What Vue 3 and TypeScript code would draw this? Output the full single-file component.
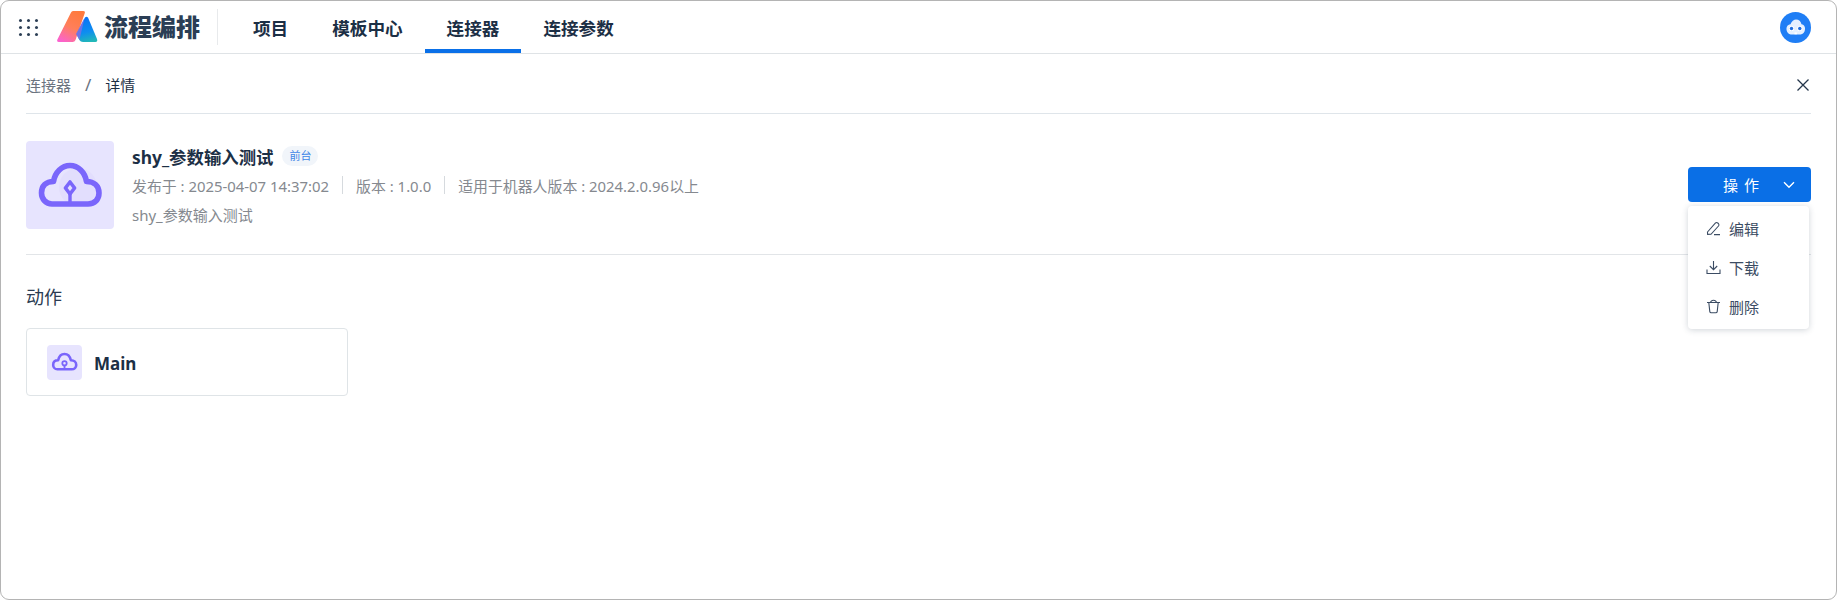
<script setup lang="ts">
const tabs: { label: string; active?: boolean }[] = [
  { label: '项目' },
  { label: '模板中心' },
  { label: '连接器', active: true },
  { label: '连接参数' },
]
const dots: number[] = [0, 1, 2, 3, 4, 5, 6, 7, 8]
</script>

<template>
  <div class="frame">
    <header class="topbar">
      <div class="grid-icon">
        <i v-for="d in dots" :key="d"></i>
      </div>
      <svg class="logo" width="41" height="32" viewBox="0 0 41 32">
        <defs>
          <linearGradient id="lg1" x1="0.7" y1="0" x2="0.2" y2="1">
            <stop offset="0" stop-color="#ff7a3d" />
            <stop offset="0.5" stop-color="#ff7f5a" />
            <stop offset="1" stop-color="#fb62cf" />
          </linearGradient>
          <linearGradient id="lg2" x1="0.4" y1="0" x2="0.6" y2="1">
            <stop offset="0" stop-color="#0a72f5" />
            <stop offset="0.6" stop-color="#0e8df0" />
            <stop offset="1" stop-color="#22b8b8" />
          </linearGradient>
        </defs>
        <path d="M14 1.5 Q14.6 0 16 0 H26 Q28.4 0 27.8 2 L18.5 29 Q17.8 31 15.5 31 H2 Q-0.6 31 0.4 28.6 Z" fill="url(#lg1)" />
        <path d="M28 6.5 Q29.3 4.8 31 6.5 L40 28 Q41 31 38.4 31 H26 Q23.5 31 22.4 29 L19.5 23 Z" fill="url(#lg2)" />
        <path d="M27.6 6.8 L22.4 29 L19 23 Z" fill="#7b70e6" opacity="0.85" />
      </svg>
      <span class="brand">流程编排</span>
      <span class="brand-sep"></span>
      <nav class="tabs">
        <a v-for="t in tabs" :key="t.label" class="tab" :class="{ active: t.active }">{{ t.label }}</a>
      </nav>
      <svg class="avatar" width="31" height="31" viewBox="0 0 31 31">
        <circle cx="15.5" cy="15.5" r="15.5" fill="#1f7ef5" />
        <path d="M7 19.5 C5.5 15.5 7.5 12.5 10.5 12.3 C11.5 9 14 7.5 16 7.5 C19 7.5 20.8 9.5 21.5 12.3 C24.5 12.8 26 15.8 24.5 19.5 C23.5 22 21 22.5 19 22.5 H12.5 C10 22.5 8 22 7 19.5 Z" fill="#e4f0ff" />
        <circle cx="11.5" cy="16.5" r="2.6" fill="#fff" />
        <circle cx="19.8" cy="16.5" r="2.6" fill="#fff" />
        <circle cx="11.5" cy="16.5" r="1.7" fill="#1f6fe0" />
        <circle cx="19.8" cy="16.5" r="1.7" fill="#1f6fe0" />
        <path d="M14.5 20.6 h2.4 v1.6 h-2.4 z" fill="#fff" />
      </svg>
    </header>

    <main class="page">
      <div class="crumbs">
        <span class="crumb">连接器</span>
        <span class="slash">/</span>
        <span class="crumb current">详情</span>
        <svg class="close" width="14" height="14" viewBox="0 0 14 14">
          <path d="M1.5 1.5 L12.5 12.5 M12.5 1.5 L1.5 12.5" stroke="#24364b" stroke-width="1.3" fill="none" />
        </svg>
      </div>

      <section class="detail">
        <div class="big-icon">
          <svg width="88" height="88" viewBox="0 0 88 88">
            <circle cx="52" cy="46" r="19" fill="#dfdafc" opacity="0.6" />
            <path d="M26 63 H62 C69 63 73 58 73 52 C73 45 68 40.5 60.5 40.5 C59 31 52 24.5 44 24.5 C36 24.5 29 31 27.5 40.5 C20 40.5 15.5 45 15.5 52 C15.5 58 20 63 26 63 Z" fill="none" stroke="#7a66fb" stroke-width="5.6" stroke-linejoin="round" />
            <path d="M44 41 L48.6 47 L44 53 L39.4 47 Z" fill="none" stroke="#7a66fb" stroke-width="3.6" stroke-linejoin="round" />
            <path d="M44 53 V63" stroke="#7a66fb" stroke-width="3.4" fill="none" />
          </svg>
        </div>
        <div class="info">
          <div class="title-row">
            <span class="title">shy_参数输入测试</span>
            <span class="tag">前台</span>
          </div>
          <div class="meta">
            <span>发布于 : 2025-04-07 14:37:02</span>
            <span class="vsep"></span>
            <span>版本 : 1.0.0</span>
            <span class="vsep"></span>
            <span>适用于机器人版本 : 2024.2.0.96以上</span>
          </div>
          <div class="desc">shy_参数输入测试</div>
        </div>
        <div class="actions">
          <button class="op-btn" type="button">
            <span class="op-label">操 作</span>
            <svg width="12" height="8" viewBox="0 0 12 8">
              <path d="M1 1.2 L6 6.2 L11 1.2" fill="none" stroke="#fff" stroke-width="1.4" />
            </svg>
          </button>
          <ul class="menu">
            <li>
              <svg width="15" height="15" viewBox="0 0 15 15" fill="none" stroke="#3b4c63" stroke-width="1.1">
                <path d="M1.5 11 L9.5 2 Q10.6 1 11.8 2 L12.6 2.8 Q13.4 3.9 12.5 5 L5 13.3 L1.6 13.4 Z" />
                <path d="M8 13.6 H14" />
              </svg>
              <span>编辑</span>
            </li>
            <li>
              <svg width="15" height="15" viewBox="0 0 15 15" fill="none" stroke="#3b4c63" stroke-width="1.1">
                <path d="M7.5 1 V9.5 M3.8 6 L7.5 9.7 L11.2 6" />
                <path d="M1 9.5 V13.5 H14 V9.5" />
              </svg>
              <span>下载</span>
            </li>
            <li>
              <svg width="15" height="15" viewBox="0 0 15 15" fill="none" stroke="#3b4c63" stroke-width="1.1">
                <path d="M1 3.5 H14 M4.5 3.5 Q5 1.2 7.5 1.2 Q10 1.2 10.5 3.5" />
                <path d="M2.8 3.5 L3.8 12.6 Q4 13.8 5.2 13.8 H9.8 Q11 13.8 11.2 12.6 L12.2 3.5" />
              </svg>
              <span>删除</span>
            </li>
          </ul>
        </div>
      </section>

      <h2 class="section-title">动作</h2>
      <div class="action-card">
        <div class="small-icon">
          <svg width="35" height="35" viewBox="0 0 88 88">
            <path d="M26 61 H62 C69 61 73.5 56 73.5 50 C73.5 43 68 38.5 60 38.5 C58 29 52 22.5 44 22.5 C36 22.5 30 29 28 38.5 C20 38.5 15.5 43 15.5 50 C15.5 56 20 61 26 61 Z" fill="none" stroke="#7a66fb" stroke-width="6.5" stroke-linejoin="round" />
            <circle cx="44" cy="46" r="5.5" fill="none" stroke="#7a66fb" stroke-width="4.5" />
            <path d="M44 52 V61" stroke="#7a66fb" stroke-width="4.5" fill="none" />
          </svg>
        </div>
        <span class="card-name">Main</span>
      </div>
    </main>
  </div>
</template>

<style>
html, body { margin: 0; background: #fff; }
</style>

<style scoped>
.frame {
  box-sizing: border-box;
  width: 1837px;
  height: 600px;
  border: 1px solid #b4b4b4;
  border-radius: 9px;
  overflow: hidden;
  background: #fff;
  font-family: "Noto Sans", "Noto Sans CJK SC", sans-serif;
  color: #1c2f45;
}
.topbar {
  display: flex;
  align-items: center;
  height: 53px;
  box-sizing: border-box;
  border-bottom: 1px solid #dfe3e6;
  padding: 0 25px 0 18px;
}
.grid-icon {
  display: grid;
  grid-template-columns: repeat(3, 3px);
  gap: 4px 5px;
  width: 19px;
}
.grid-icon i {
  width: 3px;
  height: 3px;
  border-radius: 50%;
  background: #2c3f55;
}
.logo { margin-left: 19px; }
.brand {
  margin-left: 6px;
  font-size: 24px;
  line-height: 32px;
  font-weight: 900;
  color: #2b3e55;
  white-space: nowrap;
}
.brand-sep {
  width: 1px;
  height: 36px;
  margin-left: 17px;
  background: #e8eaec;
}
.tabs {
  display: flex;
  margin-left: 13px;
  height: 52px;
  flex: 1;
}
.tab {
  display: flex;
  align-items: center;
  padding: 3px 22px 0;
  height: 52px;
  box-sizing: border-box;
  font-size: 17.6px;
  font-weight: 700;
  color: #1c2f45;
  border-bottom: 3px solid transparent;
}
.tab.active { border-bottom: 4px solid #0a70e8; padding-top: 4px; }
.page { padding: 0 25px; }
.crumbs {
  display: flex;
  align-items: center;
  height: 60px;
  box-sizing: border-box;
  padding-top: 2px;
  border-bottom: 1px solid #dfe5ea;
  font-size: 15px;
}
.crumb { color: #6b7380; }
.crumb.current { color: #1c2f45; }
.slash { margin: 0 14px; color: #6b7380; font-size: 17px; }
.close { margin-left: auto; margin-right: 1px; }
.detail {
  display: flex;
  padding: 27px 0 25px;
  border-bottom: 1px solid #e2e5e8;
  height: 141px;
  box-sizing: border-box;
}
.big-icon {
  width: 88px;
  height: 88px;
  border-radius: 4px;
  background: #e7e4fe;
  flex: none;
}
.info { margin-left: 18px; flex: 1; }
.title-row {
  display: flex;
  align-items: center;
  height: 26px;
  margin-top: 2px;
}
.title {
  font-size: 17.4px;
  font-weight: 700;
  color: #1c2f45;
}
.tag {
  margin-left: 9px;
  width: 36px;
  height: 20px;
  border-radius: 10px;
  background: #f1f5fa;
  color: #3f86e6;
  font-size: 11px;
  line-height: 20px;
  text-align: center;
}
.meta {
  display: flex;
  align-items: center;
  height: 20px;
  margin-top: 6px;
  font-size: 14.9px;
  color: #85898f;
  white-space: nowrap;
}
.vsep {
  width: 1px;
  height: 18px;
  background: #d6dade;
  margin: 0 13px;
}
.desc {
  margin-top: 10px;
  height: 20px;
  line-height: 20px;
  font-size: 15px;
  color: #85898f;
}
.actions {
  position: relative;
  width: 123px;
  flex: none;
  padding-top: 26px;
}
.op-btn {
  display: flex;
  align-items: center;
  width: 123px;
  height: 35px;
  padding: 0 16px 0 35px;
  border: none;
  border-radius: 4px;
  background: #0a6fe6;
  color: #fff;
  font-family: inherit;
  font-size: 15px;
  justify-content: space-between;
}
.op-label { white-space: pre; word-spacing: 2px; }
.menu {
  position: absolute;
  left: 0;
  top: 65px;
  width: 121px;
  height: 123px;
  box-sizing: border-box;
  margin: 0;
  padding: 3px 0;
  list-style: none;
  background: #fff;
  border-radius: 4px;
  box-shadow: 0 1px 6px rgba(40, 60, 80, 0.22);
}
.menu li {
  display: flex;
  align-items: center;
  height: 39px;
  padding-left: 18px;
  font-size: 15px;
  color: #3b4c63;
}
.menu li span { margin-left: 8px; }
.section-title {
  margin: 29px 0 0;
  height: 27px;
  line-height: 27px;
  font-size: 18px;
  font-weight: 400;
  color: #2b3c52;
}
.action-card {
  display: flex;
  align-items: center;
  width: 322px;
  height: 68px;
  box-sizing: border-box;
  margin-top: 17px;
  padding-left: 20px;
  border: 1px solid #dfe4e7;
  border-radius: 4px;
}
.small-icon {
  width: 35px;
  height: 35px;
  border-radius: 4px;
  background: #e7e4fe;
}
.card-name {
  margin-left: 12px;
  margin-top: 2px;
  font-size: 17px;
  font-weight: 700;
  color: #1c2f45;
}
</style>
